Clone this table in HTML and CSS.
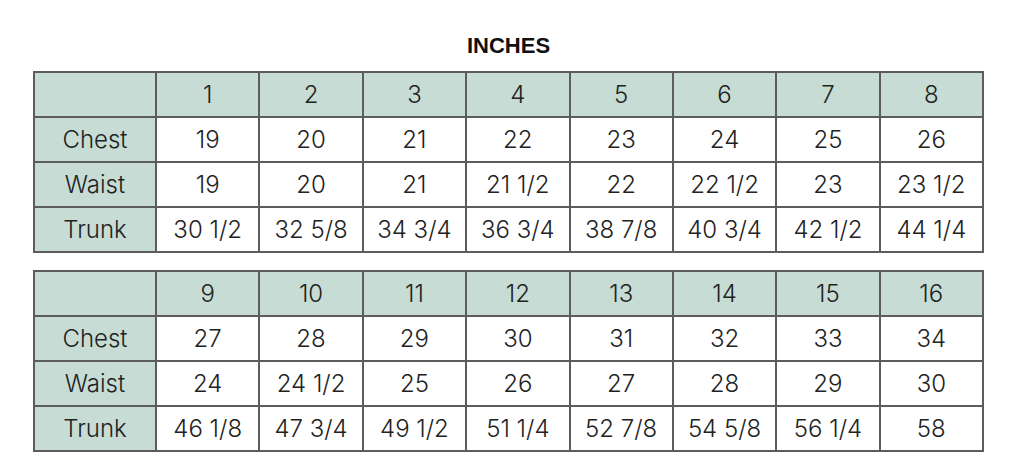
FILE: index.html
```html
<!DOCTYPE html>
<html>
<head>
<meta charset="utf-8">
<link rel="stylesheet" href="styles.css">
</head>
<body>
<div class="page">
  <h1 class="title">INCHES</h1>
  <table class="size">
    <colgroup><col class="c-label"><col span="8"></colgroup>
    <tr class="head"><td class="label"></td><td>1</td><td>2</td><td>3</td><td>4</td><td>5</td><td>6</td><td>7</td><td>8</td></tr>
    <tr><td class="label">Chest</td><td>19</td><td>20</td><td>21</td><td>22</td><td>23</td><td>24</td><td>25</td><td>26</td></tr>
    <tr><td class="label">Waist</td><td>19</td><td>20</td><td>21</td><td>21 1/2</td><td>22</td><td>22 1/2</td><td>23</td><td>23 1/2</td></tr>
    <tr><td class="label">Trunk</td><td>30 1/2</td><td>32 5/8</td><td>34 3/4</td><td>36 3/4</td><td>38 7/8</td><td>40 3/4</td><td>42 1/2</td><td>44 1/4</td></tr>
  </table>
  <table class="size">
    <colgroup><col class="c-label"><col span="8"></colgroup>
    <tr class="head"><td class="label"></td><td>9</td><td>10</td><td>11</td><td>12</td><td>13</td><td>14</td><td>15</td><td>16</td></tr>
    <tr><td class="label">Chest</td><td>27</td><td>28</td><td>29</td><td>30</td><td>31</td><td>32</td><td>33</td><td>34</td></tr>
    <tr><td class="label">Waist</td><td>24</td><td>24 1/2</td><td>25</td><td>26</td><td>27</td><td>28</td><td>29</td><td>30</td></tr>
    <tr><td class="label">Trunk</td><td>46 1/8</td><td>47 3/4</td><td>49 1/2</td><td>51 1/4</td><td>52 7/8</td><td>54 5/8</td><td>56 1/4</td><td>58</td></tr>
  </table>
</div>
</body>
</html>
```
FILE: styles.css
```css
html, body {
  margin: 0;
  padding: 0;
  background: #ffffff;
}
.page {
  padding: 33px 0 0 33px;
  width: 951px;
}
.title {
  margin: 0;
  height: 38px;
  font-family: "Liberation Sans", Arial, sans-serif;
  font-weight: 700;
  font-size: 22px;
  line-height: 26px;
  text-align: center;
  color: #111111;
}
.size {
  border-collapse: collapse;
  table-layout: fixed;
  width: 951px;
  margin-bottom: 17px;
  font-family: Inter, "Noto Sans", sans-serif;
  font-weight: 300;
  font-size: 24px;
  color: #222222;
}
.c-label {
  width: 122px;
}
.size td {
  border: 2px solid #5c5c5c;
  height: 43px;
  padding: 0;
  text-align: center;
  vertical-align: middle;
}
.size .label,
.size .head td {
  background: #c6dcd4;
}
```
